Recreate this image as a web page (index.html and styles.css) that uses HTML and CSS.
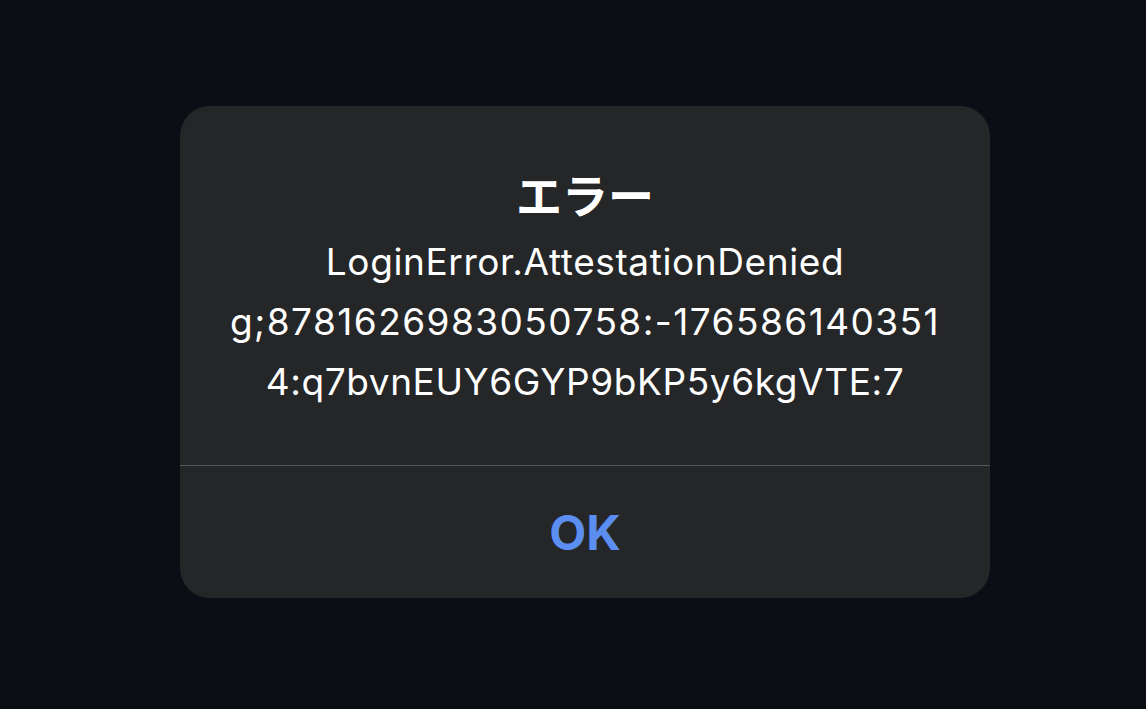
FILE: index.html
```html
<!DOCTYPE html>
<html lang="ja">
<head>
<meta charset="utf-8">
<link rel="stylesheet" href="styles.css">
</head>
<body>
<div class="page">
  <div class="alert">
    <div class="content">
      <div class="title">エラー</div>
      <div class="message">LoginError.AttestationDenied<br><span class="digits">g;8781626983050758:-176586140351</span><br>4:q7bvnEUY6GYP9bKP5y6kgVTE:7</div>
    </div>
    <div class="actions">
      <div class="btn">OK</div>
    </div>
  </div>
</div>
</body>
</html>
```

FILE: styles.css
```css
html, body {
  margin: 0;
  padding: 0;
  background: #0b0e14;
}
.page {
  width: 1146px;
  height: 709px;
  box-sizing: border-box;
  padding: 106px 0 0 180px;
}
.alert {
  width: 810px;
  height: 492px;
  background: #252628;
  border-radius: 30px;
  display: flex;
  flex-direction: column;
  overflow: hidden;
}
.content {
  height: 360px;
  box-sizing: border-box;
  padding-top: 58px;
  border-bottom: 1px solid #58585b;
  text-align: center;
  color: #ffffff;
}
.title {
  font-family: "Noto Sans CJK JP", sans-serif;
  font-weight: 700;
  font-size: 46px;
  line-height: 58px;
}
.message {
  font-family: Inter, "Noto Sans", sans-serif;
  font-size: 37px;
  letter-spacing: 0.6px;
  line-height: 60px;
  margin-top: 10px;
}
.digits {
  letter-spacing: 1.45px;
}
.actions {
  flex: 1;
  display: flex;
  align-items: center;
  justify-content: center;
}
.btn {
  font-family: Inter, "Noto Sans", sans-serif;
  font-weight: 700;
  font-size: 48px;
  color: #5b8ef0;
}
```
